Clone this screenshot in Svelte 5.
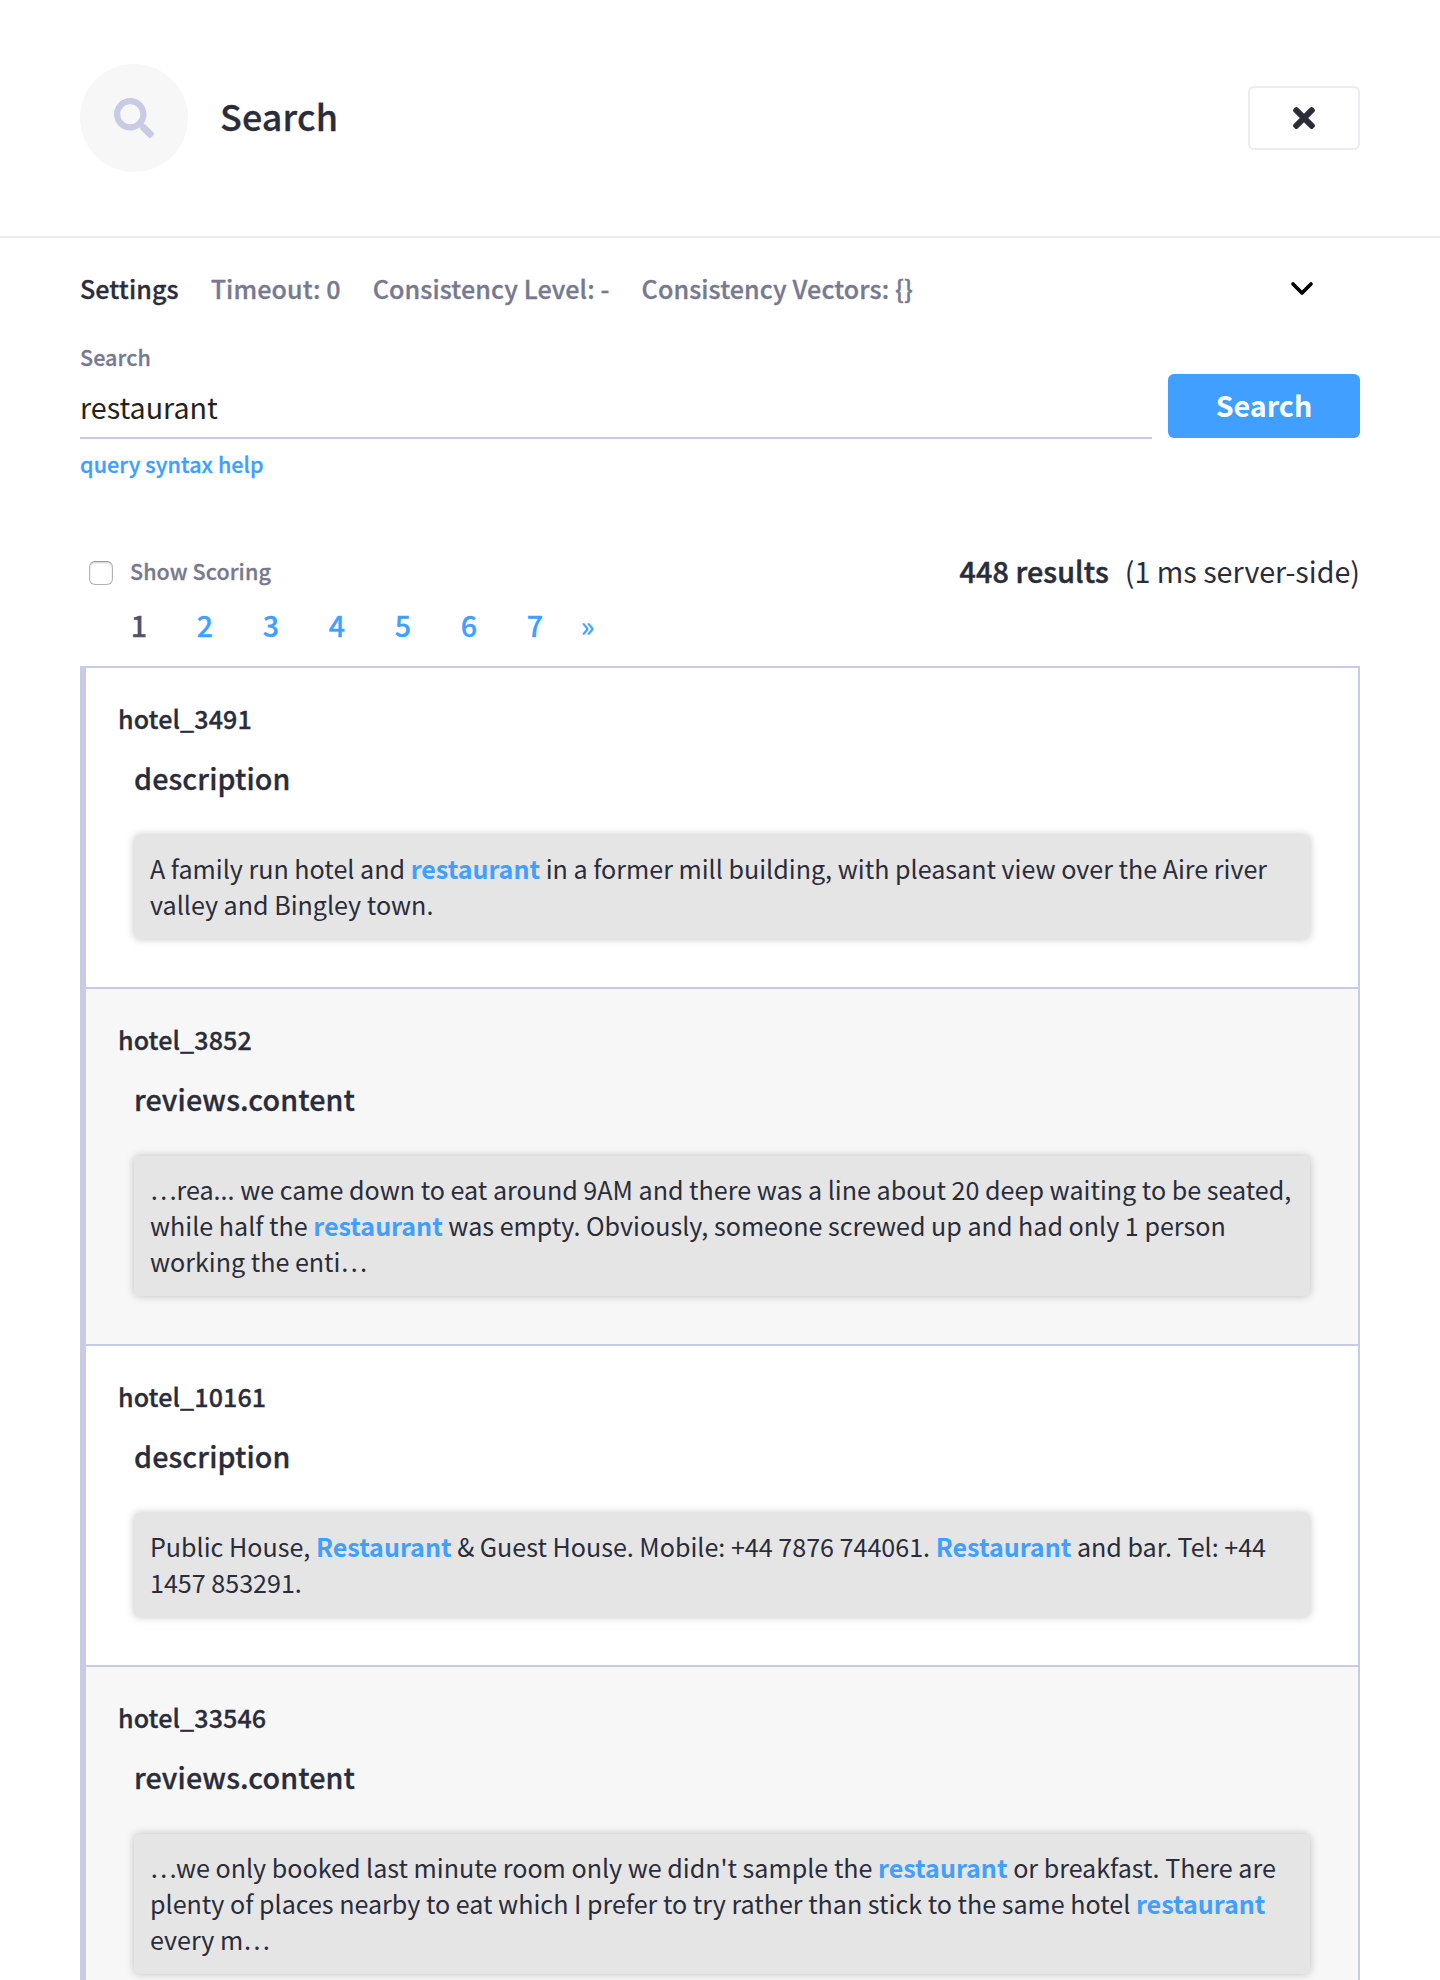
<script>
  let query = $state('restaurant');
  let showScoring = $state(false);

  const settings = ['Timeout: 0', 'Consistency Level: -', 'Consistency Vectors: {}'];
  const pages = [1, 2, 3, 4, 5, 6, 7];

  // Each fragment is a list of [text, highlighted] runs.
  const results = [
    {
      id: 'hotel_3491',
      field: 'description',
      runs: [
        ['A family run hotel and ', false],
        ['restaurant', true],
        [' in a former mill building, with pleasant view over the Aire river valley and Bingley town.', false]
      ]
    },
    {
      id: 'hotel_3852',
      field: 'reviews.content',
      runs: [
        ['…rea... we came down to eat around 9AM and there was a line about 20 deep waiting to be seated, while half the ', false],
        ['restaurant', true],
        [' was empty. Obviously, someone screwed up and had only 1 person working the enti…', false]
      ]
    },
    {
      id: 'hotel_10161',
      field: 'description',
      runs: [
        ['Public House, ', false],
        ['Restaurant', true],
        [' & Guest House. Mobile: +44 7876 744061. ', false],
        ['Restaurant', true],
        [' and bar. Tel: +44 1457 853291.', false]
      ]
    },
    {
      id: 'hotel_33546',
      field: 'reviews.content',
      runs: [
        ["…we only booked last minute room only we didn't sample the ", false],
        ['restaurant', true],
        [' or breakfast. There are plenty of places nearby to eat which I prefer to try rather than stick to the same hotel ', false],
        ['restaurant', true],
        [' every m…', false]
      ]
    }
  ];
</script>

<div class="page">
  <header class="header">
    <div class="badge">
      <svg viewBox="0 0 512 512" width="40" height="40" aria-hidden="true">
        <path fill="currentColor" d="M505 442.7L405.3 343c-4.5-4.5-10.6-7-17-7H372c27.6-35.3 44-79.7 44-128C416 93.1 322.9 0 208 0S0 93.1 0 208s93.1 208 208 208c48.3 0 92.7-16.4 128-44v16.3c0 6.4 2.5 12.5 7 17l99.7 99.7c9.4 9.4 24.6 9.4 33.9 0l28.3-28.3c9.4-9.4 9.4-24.6.1-34zM208 336c-70.7 0-128-57.2-128-128 0-70.7 57.2-128 128-128 70.7 0 128 57.2 128 128 0 70.7-57.2 128-128 128z" />
      </svg>
    </div>
    <h1 class="title semi">Search</h1>
    <button class="close" aria-label="Close">
      <svg viewBox="0 0 352 512" width="22" height="32" aria-hidden="true">
        <path fill="currentColor" d="M242.72 256l100.07-100.07c12.28-12.28 12.28-32.19 0-44.48l-22.24-22.24c-12.28-12.28-32.19-12.28-44.48 0L176 189.28 75.93 89.21c-12.28-12.28-32.19-12.28-44.48 0L9.21 111.45c-12.28 12.28-12.28 32.19 0 44.48L109.28 256 9.21 356.07c-12.28 12.28-12.28 32.19 0 44.48l22.24 22.24c12.28 12.28 32.2 12.28 44.48 0L176 322.72l100.07 100.07c12.28 12.28 32.2 12.28 44.48 0l22.24-22.24c12.28-12.28 12.28-32.19 0-44.48L242.72 256z" />
      </svg>
    </button>
  </header>

  <main class="main">
    <div class="settings semi">
      <span class="settings-name">Settings</span>
      {#each settings as item}
        <span>{item}</span>
      {/each}
      <svg class="chevron" viewBox="0 0 24 16" width="24" height="16" aria-hidden="true">
        <path d="M3 4l9 9 9-9" fill="none" stroke="#000" stroke-width="3.7" stroke-linecap="round" stroke-linejoin="round" />
      </svg>
    </div>

    <form class="search">
      <div class="field">
        <label class="label semi" for="query">Search</label>
        <input id="query" class="input" type="text" spellcheck="false" bind:value={query} />
      </div>
      <button class="submit" type="button">Search</button>
    </form>
    <a class="help semi" href="#help">query syntax help</a>

    <div class="summary">
      <label class="scoring semi">
        <input class="check" type="checkbox" bind:checked={showScoring} />
        <span>Show Scoring</span>
      </label>
      <div class="counts">
        <span class="total">448 results</span>
        <span>(1 ms server-side)</span>
      </div>
    </div>

    <nav class="pages">
      {#each pages as n}
        <a class="page-link semi" class:current={n === 1} href="#page">{n}</a>
      {/each}
      <a class="next" href="#page">»</a>
    </nav>

    <div class="results">
      {#each results as r}
        <section class="row">
          <h2 class="doc semi">{r.id}</h2>
          <h3 class="name semi">{r.field}</h3>
          <p class="fragment">{#each r.runs as [text, hit]}{#if hit}<mark class="hit">{text}</mark>{:else}{text}{/if}{/each}</p>
        </section>
      {/each}
    </div>
  </main>
</div>

<style>
  :global(body) {
    background: #fff;
  }
  .page {
    height: 1980px;
    overflow: hidden;
    color: #2a2c3a;
    font-family: 'Noto Sans CJK KR', 'Noto Sans CJK SC', sans-serif;
    font-size: 25.08px;
    line-height: 36px;
  }
  .page * {
    box-sizing: border-box;
  }
  .semi {
    font-weight: 500;
    letter-spacing: 0.004em;
    -webkit-text-stroke: 0.3px currentColor;
  }
  a {
    color: #409fff;
    text-decoration: none;
  }
  button,
  input {
    font-family: inherit;
    margin: 0;
  }

  .header {
    display: flex;
    align-items: center;
    gap: 32px;
    padding: 64px 80px;
    border-bottom: 2px solid #ebebf2;
  }
  .badge {
    display: flex;
    align-items: center;
    justify-content: center;
    width: 108px;
    height: 108px;
    border-radius: 50%;
    background: #f7f7f7;
    color: #c9cae3;
  }
  .title {
    flex: 1;
    margin: 0;
    padding-bottom: 6px;
    font-size: 35.83px;
    line-height: 52px;
  }
  .close {
    display: flex;
    align-items: center;
    justify-content: center;
    width: 112px;
    height: 64px;
    padding: 0;
    border: 2px solid #ebebf2;
    border-radius: 6px;
    background: #fff;
    color: #2a2c3a;
  }

  .main {
    padding: 32px 80px 0;
  }
  .settings {
    display: flex;
    align-items: center;
    gap: 32px;
    color: #77798f;
  }
  .settings-name {
    color: #2a2c3a;
  }
  .chevron {
    margin: 0 46px 0 auto;
  }

  .search {
    display: flex;
    align-items: flex-start;
    gap: 16px;
    margin-top: 35px;
  }
  .field {
    flex: 1;
    display: flex;
    flex-direction: column;
  }
  .label {
    color: #77798f;
    font-size: 21.5px;
    line-height: 31px;
  }
  .input {
    height: 67px;
    padding: 14px 0 10px;
    border: 0;
    border-bottom: 2px solid #c9cae3;
    border-radius: 0;
    outline: 0;
    background: none;
    color: #222;
    font-size: 28.66px;
    line-height: 41px;
  }
  .submit {
    width: 192px;
    height: 64px;
    margin-top: 33px;
    padding: 0 0 3px;
    border: 0;
    border-radius: 6px;
    background: #409fff;
    color: #fff;
    font-size: 28.66px;
    font-weight: 700;
    line-height: 41px;
  }
  .help {
    display: block;
    margin-top: 9px;
    font-size: 21.5px;
    line-height: 31px;
  }

  .summary {
    display: flex;
    align-items: center;
    justify-content: space-between;
    height: 41px;
    margin-top: 71px;
  }
  .scoring {
    display: flex;
    align-items: center;
    gap: 17px;
    padding-left: 9px;
    color: #77798f;
    font-size: 21.5px;
    line-height: 31px;
  }
  .check {
    appearance: none;
    width: 24px;
    height: 24px;
    margin-top: 5px;
    border: 1px solid #b4b4b4;
    border-top-color: #9a9a9a;
    border-radius: 6px;
    background: #fff;
    box-shadow: inset 0 1px 2px rgba(0, 0, 0, 0.2);
  }
  .counts {
    display: flex;
    gap: 16px;
    font-size: 28.66px;
    line-height: 41px;
  }
  .total {
    font-weight: 500;
    letter-spacing: 0.004em;
    -webkit-text-stroke: 0.5px currentColor;
  }

  .pages {
    display: flex;
    margin-top: 13px;
    padding-left: 26px;
    font-size: 28.66px;
    line-height: 41px;
    text-align: center;
  }
  .page-link {
    width: 66px;
  }
  .current {
    color: #50526c;
  }
  .next {
    width: 39px;
    -webkit-text-stroke: 0.3px currentColor;
  }

  .results {
    margin-top: 21px;
    border: 2px solid #c9cae3;
    border-left-width: 6px;
  }
  .row {
    padding: 32px 48px 48px 32px;
    border-bottom: 2px solid #c9cae3;
  }
  .row:nth-child(even) {
    background: #f7f7f7;
  }
  .doc {
    margin: 0;
    font-size: 25.08px;
    line-height: 36px;
  }
  .name {
    margin: 21px 0 37px 16px;
    font-size: 28.66px;
    line-height: 41px;
  }
  .fragment {
    margin: 0 0 0 16px;
    padding: 15px 16px 17px;
    border-radius: 5px;
    background: #e5e5e5;
    box-shadow: 0 0 8px rgba(0, 0, 0, 0.23);
  }
  .hit {
    background: none;
    color: #409fff;
    font-weight: 700;
  }
</style>
